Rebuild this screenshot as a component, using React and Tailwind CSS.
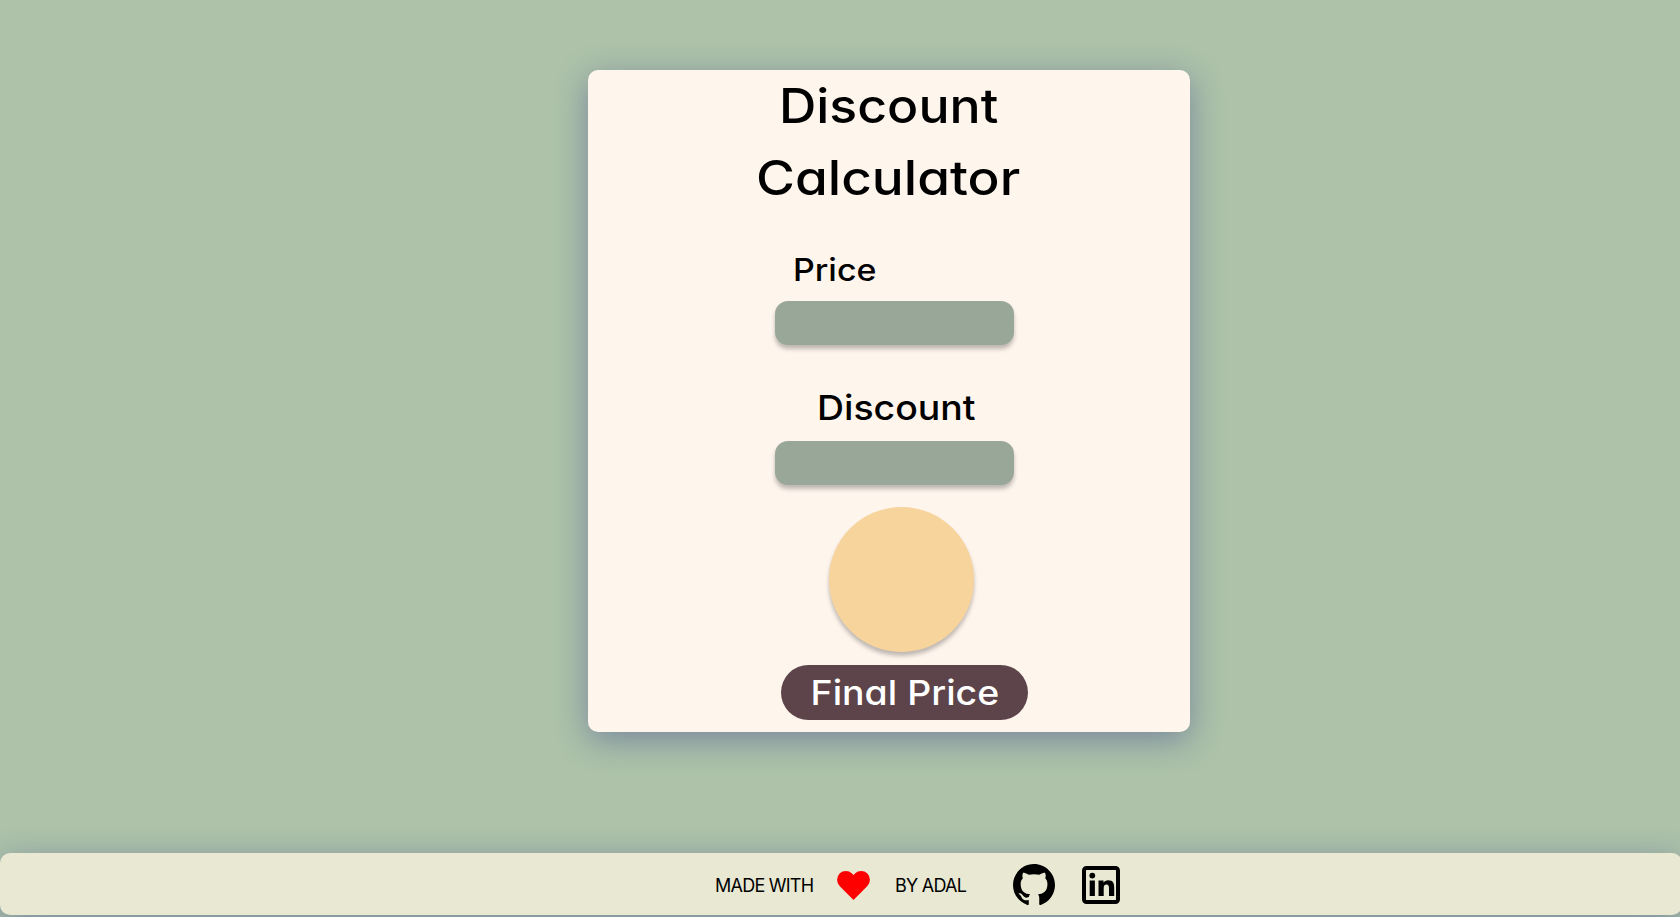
import { BsGithub } from "react-icons/bs";

const field =
  "h-[44px] w-[239px] rounded-[13px] bg-[#99a799] shadow-[0_4px_4px_rgba(0,0,0,0.25)] outline-none px-3";

export default function App() {
  return (
    <div className="flex h-[917px] flex-col overflow-hidden bg-[#adc2a9] font-['Inter',sans-serif] text-black [font-feature-settings:'cv11']">
      <main className="mt-[70px] ml-[588px] flex h-[662px] w-[602px] shrink-0 flex-col rounded-[10px] bg-[#fef5ed] shadow-[0_8px_32px_rgba(31,38,135,0.37)]">
        <h1 className="mr-[1px] flex flex-col items-center text-[47.5px] leading-[72px] font-[470]">
          <span className="scale-x-[1.09]">Discount</span>
          <span className="scale-x-[1.118]">Calculator</span>
        </h1>
        <label htmlFor="price" className="mt-[32px] ml-[205px] origin-left scale-x-[1.095] self-start text-[31px] leading-[48px] font-medium">
          Price
        </label>
        <input id="price" className={`${field} mt-[7px] ml-[187px]`} />
        <label htmlFor="discount" className="mt-[36px] ml-[229px] origin-left scale-x-[1.085] self-start text-[34.5px] leading-[54px] font-medium">
          Discount
        </label>
        <input id="discount" className={`${field} mt-[6px] ml-[187px]`} />
        <button className="mt-[22px] ml-[241px] size-[145px] shrink-0 rounded-full bg-[#f8d49d] shadow-[0_4px_4px_rgba(0,0,0,0.25)]" />
        <div className="mt-[13px] ml-[193px] flex h-[55px] w-[247px] items-center justify-center rounded-full bg-[#5c444a] text-[34.5px] font-medium text-white">
          <span className="scale-x-[1.085]">Final Price</span>
        </div>
      </main>
      <footer className="mt-[121px] flex h-[62px] w-[1682px] shrink-0 items-center rounded-[10px] bg-[#e9e8d2] pt-[2px] text-[18px] shadow-[0_8px_32px_rgba(31,38,135,0.37)]">
        <span className="ml-[715px] w-[122px] pt-px tracking-[-0.75px]">MADE WITH</span>
        <svg className="h-[29px] w-[33px]" viewBox="0 0 33 29" fill="#f00">
          <path d="M16.5 29 2.6 15.1A9 9 0 0 1 2.6 2.6 9 9 0 0 1 15 2.6L16.5 4.1 18 2.6A9 9 0 0 1 30.4 2.6 9 9 0 0 1 30.4 15.1Z" />
        </svg>
        <span className="ml-[25px] w-[118px] pt-px tracking-[-0.75px]">BY ADAL</span>
        <BsGithub className="size-[42px]" />
        <svg className="ml-[27px] size-[38px]" viewBox="0 0 38 38">
          <rect x="2" y="2" width="34" height="34" rx="2.5" fill="none" stroke="#000" strokeWidth="4" />
          <circle cx="10.3" cy="9.6" r="2.9" />
          <path d="M7.7 14.5h5.2V30H7.7zM16.5 14.5h5v2.2c.8-1.5 2.5-2.5 4.8-2.5 4.6 0 5.9 2.8 5.9 7V30h-5.2v-7.7c0-2-.3-3.9-2.5-3.9s-2.8 1.7-2.8 3.8V30h-5.2z" />
        </svg>
      </footer>
    </div>
  );
}
